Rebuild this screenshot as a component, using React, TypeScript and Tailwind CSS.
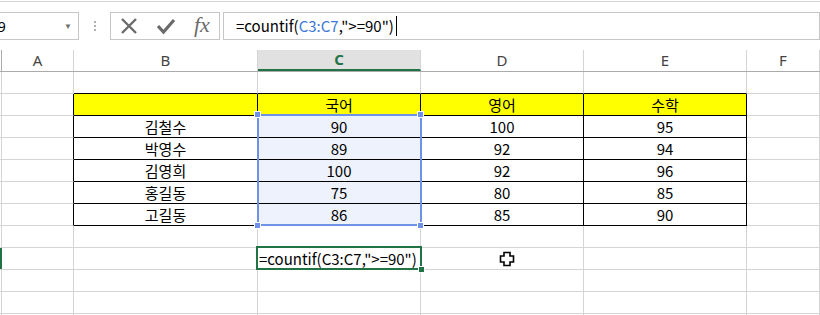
import React from "react";

const grid = "grid grid-cols-[2px_72px_184px_163px_163px_163px_1fr]";
const cellFont = { fontFamily: '"Noto Sans CJK KR", "Noto Sans", sans-serif' };

const table = [
  ["", "국어", "영어", "수학"],
  ["김철수", "90", "100", "95"],
  ["박영수", "89", "92", "94"],
  ["김영희", "100", "92", "96"],
  ["홍길동", "75", "80", "85"],
  ["고길동", "86", "85", "90"],
];

function Cell({ row, col, children }: { row: number; col: number; children?: React.ReactNode }) {
  // row: 1-based sheet row, col: 0 = row header strip, 1 = A, 2 = B ...
  const inTable = row >= 2 && row <= 7 && col >= 2 && col <= 5;
  const aboveTable = row === 1 && col >= 2 && col <= 5;
  const leftOfTable = row >= 2 && row <= 7 && col === 1;
  const right = inTable || leftOfTable ? "border-r-black" : "border-r-[#d4d4d4]";
  const bottom = inTable || aboveTable ? "border-b-black" : "border-b-[#d4d4d4]";
  let bg = "bg-white";
  if (row === 2 && col >= 2 && col <= 5) bg = "bg-[#ffff00]";
  if (row >= 3 && row <= 7 && col === 3) bg = "bg-[#eef2fc]";
  const strip = col === 0 ? (row === 9 ? "bg-[#217346] border-r-0" : "bg-white") : bg;
  return (
    <div
      className={`h-[22px] border-r border-b ${right} ${bottom} ${strip} flex items-center justify-center text-[15px] leading-none text-black overflow-visible whitespace-nowrap`}
      style={cellFont}
    >
      {children}
    </div>
  );
}

export default function App() {
  const rows = Array.from({ length: 12 }, (_, i) => i + 1);
  return (
    <div className="w-[820px] h-[315px] overflow-hidden bg-white relative">
      <div className="h-[2px] border-b border-[#d4d4d4]" />

      {/* formula bar */}
      <div className="flex items-stretch h-[28px] mt-[10px]">
        <div
          className="w-[99px] -ml-[20px] border border-[#c6c6c6] flex items-center pl-[8px] pr-[6px] text-[14px] text-black"
          style={{ fontFamily: '"Noto Sans", sans-serif' }}
        >
          <span>C9</span>
          <span className="ml-auto text-[8px] text-[#6f6f6f]">▼</span>
        </div>
        <div className="w-[31px] flex flex-col items-center justify-center gap-[2px]">
          <span className="w-[2px] h-[2px] bg-[#b0b0b0]" />
          <span className="w-[2px] h-[2px] bg-[#b0b0b0]" />
          <span className="w-[2px] h-[2px] bg-[#b0b0b0]" />
        </div>
        <div className="w-[110px] border border-[#c6c6c6] flex items-center pl-[9px] gap-[18px]">
          <svg width="18" height="18" viewBox="0 0 18 18">
            <path d="M2 2 L16 16 M16 2 L2 16" stroke="#6b6b6b" strokeWidth="2.4" />
          </svg>
          <svg width="20" height="18" viewBox="0 0 20 18">
            <path d="M2 9 L7.5 15 L18 3" stroke="#6b6b6b" strokeWidth="3.2" fill="none" strokeLinejoin="miter" />
          </svg>
          <span
            className="text-[22px] italic leading-none text-[#6b6b6b] -mt-[3px]"
            style={{ fontFamily: '"Liberation Serif", serif' }}
          >
            fx
          </span>
        </div>
        <div className="flex-1 ml-[3px] border border-[#c6c6c6] flex items-center pl-[12px] text-[15px] text-black" style={cellFont}>
          <span>=countif(</span>
          <span className="text-[#3c78d8]">C3:C7</span>
          <span>,"&gt;=90")</span>
          <span className="w-[1px] h-[20px] bg-black ml-[2px]" />
        </div>
      </div>

      {/* sheet */}
      <div className="relative mt-[10px]">
        <div className={`${grid} h-[22px] border-b border-[#ababab]`} style={{ fontFamily: '"Noto Sans", sans-serif' }}>
          <div className="border-r border-[#ababab]" />
          {["A", "B", "C", "D", "E", "F"].map((c) => (
            <div
              key={c}
              className={`flex items-center justify-center text-[15px] leading-none border-r border-[#d4d4d4] ${
                c === "C" ? "bg-[#e1e1e1] text-[#217346] font-bold border-b-2 border-b-[#217346]" : "text-[#444444]"
              }`}
            >
              {c}
            </div>
          ))}
        </div>

        {rows.map((r) => (
          <div key={r} className={grid}>
            {[0, 1, 2, 3, 4, 5, 6].map((c) => {
              let content: React.ReactNode = null;
              if (r >= 2 && r <= 7 && c >= 2 && c <= 5) content = table[r - 2][c - 2];
              return (
                <Cell key={c} row={r} col={c}>
                  {content}
                </Cell>
              );
            })}
          </div>
        ))}

        {/* selection C3:C7 */}
        <div className="absolute left-[257px] top-[64px] w-[165px] h-[112px] border-2 border-[#6e93e6]" />
        {[
          "left-[254px] top-[61px]",
          "left-[417px] top-[61px]",
          "left-[254px] top-[172px]",
          "left-[417px] top-[172px]",
        ].map((p) => (
          <div key={p} className={`absolute ${p} w-[7px] h-[7px] bg-[#6e93e6] border border-white`} />
        ))}

        {/* active cell C9 */}
        <div className="absolute left-[256px] top-[196px] w-[166px] h-[24px] border-2 border-[#217346]" />
        <div
          className="absolute left-[259px] top-[198px] h-[20px] flex items-center text-[15px] leading-none text-black whitespace-nowrap"
          style={cellFont}
        >
          =countif(C3:C7,"&gt;=90")
        </div>
        <div className="absolute left-[418px] top-[216px] w-[7px] h-[7px] bg-[#217346] border border-white" />

        {/* mouse cursor */}
        <svg className="absolute left-[499px] top-[201px]" width="16" height="16" viewBox="0 0 16 16">
          <path
            d="M5 1.5 H11 V5 H14.5 V11 H11 V14.5 H5 V11 H1.5 V5 H5 Z"
            fill="white"
            stroke="black"
            strokeWidth="1.6"
          />
        </svg>
      </div>
    </div>
  );
}
